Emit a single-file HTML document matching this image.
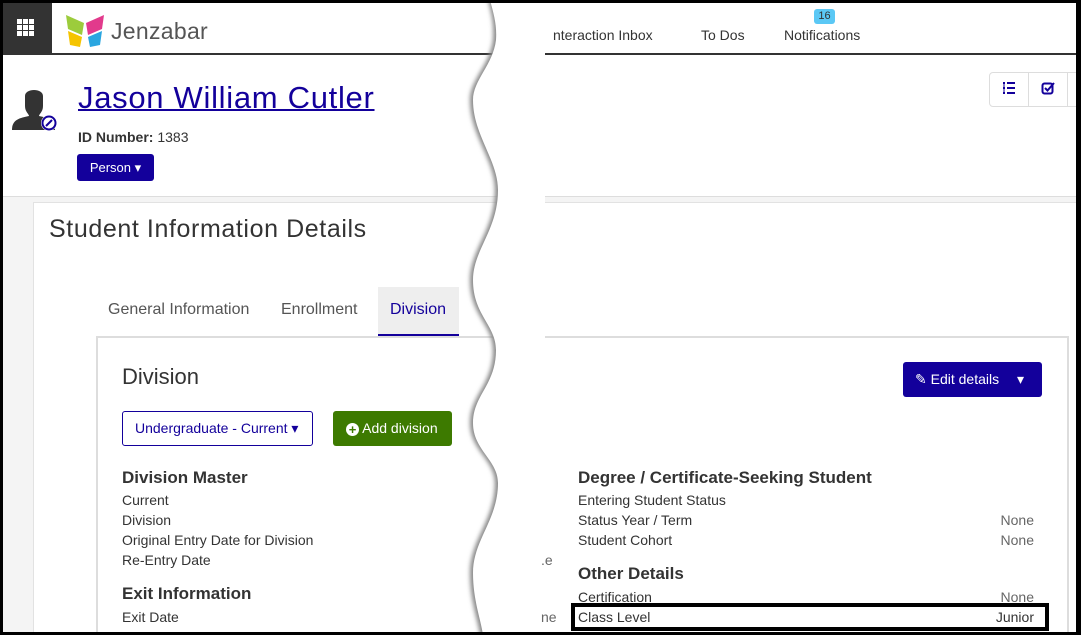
<!DOCTYPE html>
<html><head><meta charset="utf-8">
<style>
*{margin:0;padding:0;box-sizing:border-box}
html,body{width:1081px;height:635px;overflow:hidden}
body{background:#fff;font-family:"Liberation Sans",sans-serif;color:#333;position:relative}
.a{position:absolute;white-space:nowrap}
.lbl{font-size:14px;color:#333}
.h{font-size:17px;font-weight:bold;color:#333}
.val{font-size:14px;color:#666;text-align:right}
</style></head><body>
<div class="a" style="left:0;top:196px;width:1081px;height:439px;background:#f4f4f4;border-top:1px solid #ddd"></div>
<div class="a" style="left:33px;top:202px;width:1050px;height:433px;background:#fff;border:1px solid #e2e2e2;border-bottom:none"></div>
<div class="a" style="left:0;top:0;width:52px;height:55px;background:#333"></div>
<div class="a" style="left:52px;top:4px;width:1030px;height:51px;background:#fff;border-top-left-radius:8px"></div>
<div class="a" style="left:0;top:53px;width:1081px;height:2px;background:#333"></div>
<svg class="a" style="left:17px;top:19px" width="18" height="18" viewBox="0 0 18 18">
<g fill="#fff"><rect x="0" y="0" width="5" height="5"/><rect x="6" y="0" width="5" height="5"/><rect x="12" y="0" width="5" height="5"/><rect x="0" y="6" width="5" height="5"/><rect x="6" y="6" width="5" height="5"/><rect x="12" y="6" width="5" height="5"/><rect x="0" y="12" width="5" height="5"/><rect x="6" y="12" width="5" height="5"/><rect x="12" y="12" width="5" height="5"/></g></svg>
<svg class="a" style="left:64px;top:13px" width="42" height="36" viewBox="0 0 42 36">
<path d="M2 2 L20 10 L18 22 L4 16Z" fill="#9ccc3c"/><path d="M40 2 L22 10 L24 22 L38 16Z" fill="#e23a8c"/><path d="M4 18 L18 24 L16 34 L6 32Z" fill="#f5c400"/><path d="M38 18 L24 24 L26 34 L36 32Z" fill="#2aa6e0"/></svg>
<div class="a" style="left:111px;top:18px;font-size:23px;color:#555;letter-spacing:0.3px">Jenzabar</div>
<div class="a" style="left:553px;top:27px;font-size:14px;color:#333">nteraction Inbox</div>
<div class="a" style="left:701px;top:27px;font-size:14px;color:#333">To Dos</div>
<div class="a" style="left:784px;top:27px;font-size:14px;color:#333">Notifications</div>
<div class="a" style="left:814px;top:9px;width:21px;height:15px;background:#5bc8f5;border-radius:3px;font-size:11px;color:#333;text-align:center;line-height:15px">16</div>
<svg class="a" style="left:11px;top:86px" width="48" height="46" viewBox="0 0 48 46">
<path d="M14 10 C14 2 32 2 32 10 L32 20 C32 26 28 28 28 30 C38 32 44 34 44 44 L1 44 C1 34 8 32 18 30 C18 28 14 26 14 20Z" fill="#333"/>
<circle cx="38" cy="37" r="8" fill="#fff"/><circle cx="38" cy="37" r="6.5" fill="none" stroke="#13009b" stroke-width="2"/><path d="M35 40 L41 34" stroke="#13009b" stroke-width="2"/></svg>
<div class="a" style="left:78px;top:80px;font-size:31px;letter-spacing:0.7px;color:#13009b;text-decoration:underline;text-decoration-thickness:2px">Jason William Cutler</div>
<div class="a" style="left:78px;top:129px;font-size:14px;color:#333"><b>ID Number:</b> 1383</div>
<div class="a" style="left:77px;top:154px;width:77px;height:27px;background:#13009b;border-radius:3px;color:#fff;font-size:13px;line-height:27px;text-align:center">Person &#9662;</div>
<div class="a" style="left:989px;top:72px;width:100px;height:35px;border:1px solid #ddd;border-radius:4px;background:#fff"></div>
<div class="a" style="left:1028px;top:72px;width:1px;height:35px;background:#ddd"></div>
<div class="a" style="left:1067px;top:72px;width:1px;height:35px;background:#ddd"></div>
<svg class="a" style="left:1002px;top:81px" width="14" height="14" viewBox="0 0 14 14"><g fill="#13009b"><rect x="1" y="1" width="2" height="2"/><rect x="5" y="1" width="8" height="2"/><rect x="1" y="6" width="2" height="2"/><rect x="5" y="6" width="8" height="2"/><rect x="1" y="11" width="2" height="2"/><rect x="5" y="11" width="8" height="2"/><rect x="1.5" y="3" width="1" height="8"/></g></svg>
<svg class="a" style="left:1041px;top:81px" width="14" height="14" viewBox="0 0 14 14"><rect x="1.5" y="2.5" width="10" height="10" rx="2" fill="none" stroke="#13009b" stroke-width="2"/><path d="M4 7 L6.5 9.5 L13 2" fill="none" stroke="#13009b" stroke-width="2"/></svg>
<div class="a" style="left:49px;top:215px;font-size:25px;letter-spacing:0.6px;color:#333">Student Information Details</div>
<div class="a" style="left:378px;top:287px;width:81px;height:49px;background:#eee;border-bottom:2px solid #13009b"></div>
<div class="a" style="left:108px;top:301px;font-size:16px;color:#555">General Information</div>
<div class="a" style="left:281px;top:301px;font-size:16px;color:#555">Enrollment</div>
<div class="a" style="left:390px;top:301px;font-size:16px;color:#13009b">Division</div>
<div class="a" style="left:96px;top:336px;width:973px;height:310px;border:2px solid #ddd;border-bottom:none"></div>
<div class="a" style="left:122px;top:364px;font-size:22px;color:#333">Division</div>
<div class="a" style="left:122px;top:411px;width:191px;height:35px;border:1px solid #13009b;border-radius:3px;color:#13009b;font-size:14px;line-height:33px;padding-left:12px">Undergraduate - Current &#9662;</div>
<div class="a" style="left:333px;top:411px;width:119px;height:35px;background:#3d7a00;border-radius:3px;color:#fff;font-size:14px;line-height:35px;padding-left:13px"><span style="display:inline-block;width:13px;height:13px;border-radius:50%;background:#fff;color:#3d7a00;font-size:13px;line-height:13px;text-align:center;font-weight:bold;vertical-align:-1px">+</span> Add division</div>
<div class="a h" style="left:122px;top:468px">Division Master</div>
<div class="a lbl" style="left:122px;top:492px">Current</div>
<div class="a lbl" style="left:122px;top:512px">Division</div>
<div class="a lbl" style="left:122px;top:532px">Original Entry Date for Division</div>
<div class="a lbl" style="left:122px;top:552px">Re-Entry Date</div>
<div class="a h" style="left:122px;top:584px">Exit Information</div>
<div class="a lbl" style="left:122px;top:609px">Exit Date</div>
<div class="a" style="left:903px;top:362px;width:139px;height:35px;background:#13009b;border-radius:3px;color:#fff;font-size:14px;line-height:35px;padding-left:12px">&#9998; Edit details <span style="margin-left:14px">&#9662;</span></div>
<div class="a h" style="left:578px;top:468px">Degree / Certificate-Seeking Student</div>
<div class="a lbl" style="left:578px;top:492px">Entering Student Status</div>
<div class="a lbl" style="left:578px;top:512px">Status Year / Term</div>
<div class="a lbl" style="left:578px;top:532px">Student Cohort</div>
<div class="a val" style="left:960px;width:74px;top:512px">None</div>
<div class="a val" style="left:960px;width:74px;top:532px">None</div>
<div class="a h" style="left:578px;top:564px">Other Details</div>
<div class="a lbl" style="left:578px;top:589px">Certification</div>
<div class="a val" style="left:960px;width:74px;top:589px">None</div>
<div class="a" style="left:571px;top:603px;width:478px;height:28px;border:4px solid #000;background:#fff"></div>
<div class="a lbl" style="left:578px;top:609px">Class Level</div>
<div class="a lbl" style="left:960px;width:74px;top:609px;text-align:right">Junior</div>
<svg class="a" style="left:0;top:0" width="1081" height="635" viewBox="0 0 1081 635">
<defs><filter id="s" x="-20%" y="-5%" width="140%" height="110%"><feGaussianBlur stdDeviation="2"/></filter>
<clipPath id="c"><rect x="0" y="0" width="530" height="635"/></clipPath></defs>
<g clip-path="url(#c)"><path d="M486 0 C490 15 492 25 491 40 C488 65 468 80 468 100 C468 135 493 160 493 190 C493 230 468 250 468 280 C468 315 491 325 491 350 C491 385 468 395 468 423 C468 450 493 460 493 483 C493 520 468 540 468 573 C468 600 476 620 478 635 L560 635 L560 0Z" fill="#888" filter="url(#s)" transform="translate(2,0)"/></g>
<path d="M490 0 C494 15 497 25 496 40 C493 65 473 80 473 100 C473 135 498 160 498 190 C498 230 473 250 473 280 C473 315 496 325 496 350 C496 385 473 395 473 423 C473 450 498 460 498 483 C498 520 473 540 473 573 C473 600 481 620 483 635 L545 635 L545 0Z" fill="#fff"/>
</svg>
<div class="a" style="left:541px;top:552px;font-size:14px;color:#666">.e</div>
<div class="a" style="left:541px;top:609px;font-size:14px;color:#666">ne</div>
<div class="a" style="left:0;top:0;width:1081px;height:3px;background:#000"></div>
<div class="a" style="left:0;top:0;width:3px;height:635px;background:#000"></div>
<div class="a" style="left:1076px;top:0;width:5px;height:635px;background:#000"></div>
<div class="a" style="left:0;top:632px;width:1081px;height:3px;background:#000"></div>
</body></html>
